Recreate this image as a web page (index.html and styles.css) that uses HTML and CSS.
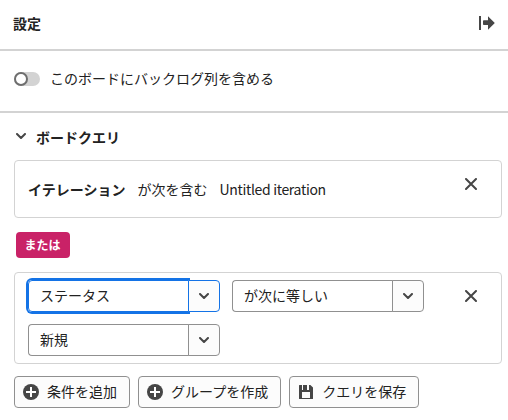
FILE: index.html
```html
<!DOCTYPE html>
<html lang="ja">
<head>
<meta charset="utf-8">
<title>設定</title>
<link rel="stylesheet" href="styles.css">
</head>
<body>
<main class="panel">
  <header class="header">
    <h1 class="title">設定</h1>
    <svg class="collapse" width="16" height="14" viewBox="0 0 16 14"><path d="M0 0h2v14H0zM9 0.3v3.9H4.8a.8.8 0 0 0-.8.8v3.2a.8.8 0 0 0 .8.8H9v4.7L15.8 7z"/></svg>
  </header>
  <section class="option">
    <span class="switch"></span>
    <span class="option-label">このボードにバックログ列を含める</span>
  </section>
  <section class="query">
    <h2 class="query-title">
      <svg class="chevron" width="10" height="6" viewBox="0 0 10 6"><path d="M1 1l4 4 4-4"/></svg>
      <span>ボードクエリ</span>
    </h2>
    <div class="card summary">
      <div class="condition"><b>イテレーション</b><span>が次を含む</span><span class="value">Untitled iteration</span></div>
      <svg class="close" width="12" height="12" viewBox="0 0 12 12"><path d="M1 1l10 10M11 1L1 11"/></svg>
    </div>
    <span class="badge">または</span>
    <div class="card editor">
      <div class="fields">
        <div class="combo focused"><span class="input">ステータス</span><span class="toggle"><svg class="chevron" width="10" height="6" viewBox="0 0 10 6"><path d="M1 1l4 4 4-4"/></svg></span></div>
        <div class="combo"><span class="input">が次に等しい</span><span class="toggle"><svg class="chevron" width="10" height="6" viewBox="0 0 10 6"><path d="M1 1l4 4 4-4"/></svg></span></div>
        <div class="combo"><span class="input">新規</span><span class="toggle"><svg class="chevron" width="10" height="6" viewBox="0 0 10 6"><path d="M1 1l4 4 4-4"/></svg></span></div>
      </div>
      <svg class="close" width="12" height="12" viewBox="0 0 12 12"><path d="M1 1l10 10M11 1L1 11"/></svg>
    </div>
    <div class="actions">
      <span class="button"><svg width="16" height="16" viewBox="0 0 16 16"><circle cx="8" cy="8" r="8"/><path class="plus" d="M8 3v10M3 8h10"/></svg><span class="label">条件を追加</span></span>
      <span class="button"><svg width="16" height="16" viewBox="0 0 16 16"><circle cx="8" cy="8" r="8"/><path class="plus" d="M8 3v10M3 8h10"/></svg><span class="label">グループを作成</span></span>
      <span class="button"><svg width="16" height="16" viewBox="0 0 16 16"><path fill-rule="evenodd" d="M1.500 1H4v5h7V1h1.400L15 3.600v10.900a.5.5 0 0 1-.5.5h-13a.5.5 0 0 1-.5-.5v-13a.5.5 0 0 1 .5-.5zM4 8v6h8V8z"/><path d="M5 1h4v5H5z"/></svg><span class="label">クエリを保存</span></span>
    </div>
  </section>
</main>
</body>
</html>
```
FILE: styles.css
```css
* { box-sizing: border-box; }
body {
  margin: 0;
  background: #fff;
  color: #222;
  font: 14px/20px "Noto Sans CJK JP", sans-serif;
}
svg { display: block; flex: none; fill: #464646; }
.panel { height: 420px; overflow: hidden; }
.header {
  display: flex;
  justify-content: space-between;
  height: 51px;
  padding: 13px 13px 0;
  border-bottom: 2px solid #d3d3d3;
}
.title { margin: 0; font-size: 14px; line-height: 20px; font-weight: 700; }
.collapse { margin-top: 3px; }
.option {
  display: flex;
  align-items: center;
  gap: 10px;
  height: 62px;
  padding: 0 14px 4px;
  border-bottom: 2px solid #d3d3d3;
}
.option-label { padding-bottom: 2px; }
.switch {
  display: flex;
  width: 26px;
  height: 14px;
  border-radius: 7px;
  background: #d3d3d3;
}
.switch::before {
  content: "";
  box-sizing: border-box;
  width: 14px;
  height: 14px;
  border: 2px solid #6e6e6e;
  border-radius: 50%;
  background: #fff;
}
.query { padding: 14px 6px 0 14px; }
.query-title {
  display: flex;
  align-items: center;
  gap: 10px;
  height: 20px;
  margin: 0 0 13px 2px;
  font-size: 14px;
  font-weight: 700;
}
.query-title .chevron { margin-bottom: 3px; }
.chevron, .close {
  fill: none;
  stroke: #464646;
  stroke-width: 2;
  stroke-linecap: round;
  stroke-linejoin: round;
}
.card {
  display: flex;
  justify-content: space-between;
  border: 1px solid #d3d3d3;
  border-radius: 4px;
}
.close { margin: 17px 24px 0 0; }
.summary { height: 58px; padding-left: 13px; }
.condition { display: flex; gap: 12px; padding-top: 18px; }
.value { letter-spacing: -0.32px; }
.badge {
  display: flex;
  align-items: center;
  justify-content: center;
  width: 54px;
  height: 26px;
  padding-right: 1px;
  margin: 14px 0 14px 2px;
  border-radius: 4px;
  background: #c92267;
  color: #fff;
  font-size: 12px;
  font-weight: 700;
}
.editor { height: 92px; padding: 7px 0 0 13px; }
.editor .close { margin-top: 10px; }
.fields { display: grid; grid-template-columns: 192px 192px; gap: 12px; align-content: start; }
.combo { display: flex; height: 32px; }
.input {
  display: flex;
  align-items: center;
  width: 161px;
  padding: 0 0 2px 11px;
  border: 1px solid #909090;
  border-right: 0;
  border-radius: 4px 0 0 4px;
}
.toggle {
  position: relative;
  display: flex;
  align-items: center;
  justify-content: center;
  width: 32px;
  margin-left: -1px;
  border: 1px solid #909090;
  border-radius: 0 4px 4px 0;
  background: #fcfcfc;
}
.focused .input {
  border: 1px solid #1473e6;
  box-shadow: 0 0 0 2px #1473e6;
  clip-path: inset(-2px -1px -2px -2px);
}
.focused .toggle { z-index: 1; border-color: #1473e6; }
.actions { display: flex; gap: 8px; margin-top: 12px; }
.button {
  display: flex;
  align-items: center;
  gap: 8px;
  height: 32px;
  padding: 0 12px 0 8px;
  border: 1px solid #909090;
  border-radius: 4px;
  background: #fcfcfc;
  white-space: nowrap;
}
.label { padding-bottom: 2px; }
.plus { fill: none; stroke: #fff; stroke-width: 2; }
```
